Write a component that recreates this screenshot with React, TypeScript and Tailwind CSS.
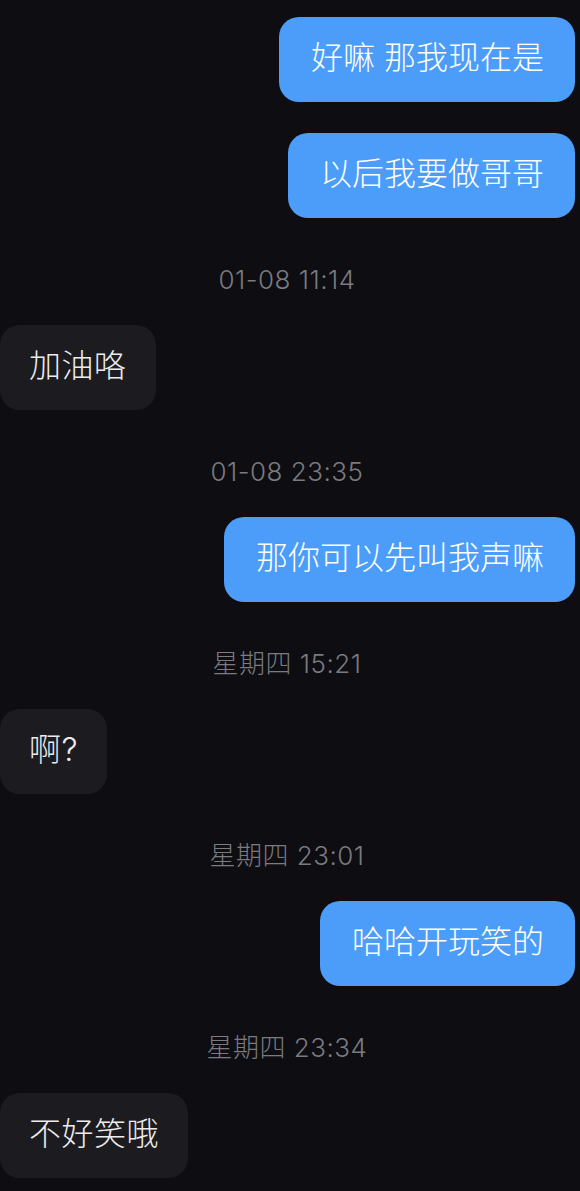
import React from "react";

type Item =
  | { kind: "time"; text: string }
  | { kind: "msg"; mine: boolean; text: string };

const items: Item[] = [
  { kind: "msg", mine: true, text: "好嘛 那我现在是" },
  { kind: "msg", mine: true, text: "以后我要做哥哥" },
  { kind: "time", text: "01-08 11:14" },
  { kind: "msg", mine: false, text: "加油咯" },
  { kind: "time", text: "01-08 23:35" },
  { kind: "msg", mine: true, text: "那你可以先叫我声嘛" },
  { kind: "time", text: "星期四 15:21" },
  { kind: "msg", mine: false, text: "啊?" },
  { kind: "time", text: "星期四 23:01" },
  { kind: "msg", mine: true, text: "哈哈开玩笑的" },
  { kind: "time", text: "星期四 23:34" },
  { kind: "msg", mine: false, text: "不好笑哦" },
];

const cjk = {
  fontFamily: 'Inter, "Noto Sans CJK SC", "Noto Sans", sans-serif',
};
const stamp = {
  fontFamily: 'Inter, "Noto Sans CJK SC", sans-serif',
};

function Bubble({ mine, text }: { mine: boolean; text: string }) {
  return (
    <div className={mine ? "flex justify-end pr-[5px]" : "flex justify-start"}>
      <div
        style={cjk}
        className={
          mine
            ? "flex h-[85px] items-center rounded-[20px] bg-[#4c9dfa] pl-[32px] pr-[31px] pb-[3px] text-[32px] font-light leading-none text-white whitespace-pre"
            : "flex h-[85px] items-center rounded-[20px] bg-[#1c1c20] px-[29px] pb-[3px] text-[32px] font-light leading-none tracking-[0.5px] text-[#ececee] whitespace-pre"
        }
      >
        {text}
      </div>
    </div>
  );
}

export default function App() {
  return (
    <div className="min-h-[1191px] w-[580px] overflow-hidden bg-[#0d0d12] pt-[17px]">
      {items.map((it, i) => {
        if (it.kind === "time") {
          return (
            <div
              key={i}
              style={stamp}
              className="mt-[45px] mb-[32px] flex h-[30px] items-center justify-center pr-[6px] pt-[2px] text-[26px] font-light tracking-[0.5px] text-[#7a7a7f]"
            >
              {it.text}
            </div>
          );
        }
        const prev = items[i - 1];
        const stacked = prev && prev.kind === "msg";
        return (
          <div key={i} className={stacked ? "mt-[31px]" : ""}>
            <Bubble mine={it.mine} text={it.text} />
          </div>
        );
      })}
    </div>
  );
}
